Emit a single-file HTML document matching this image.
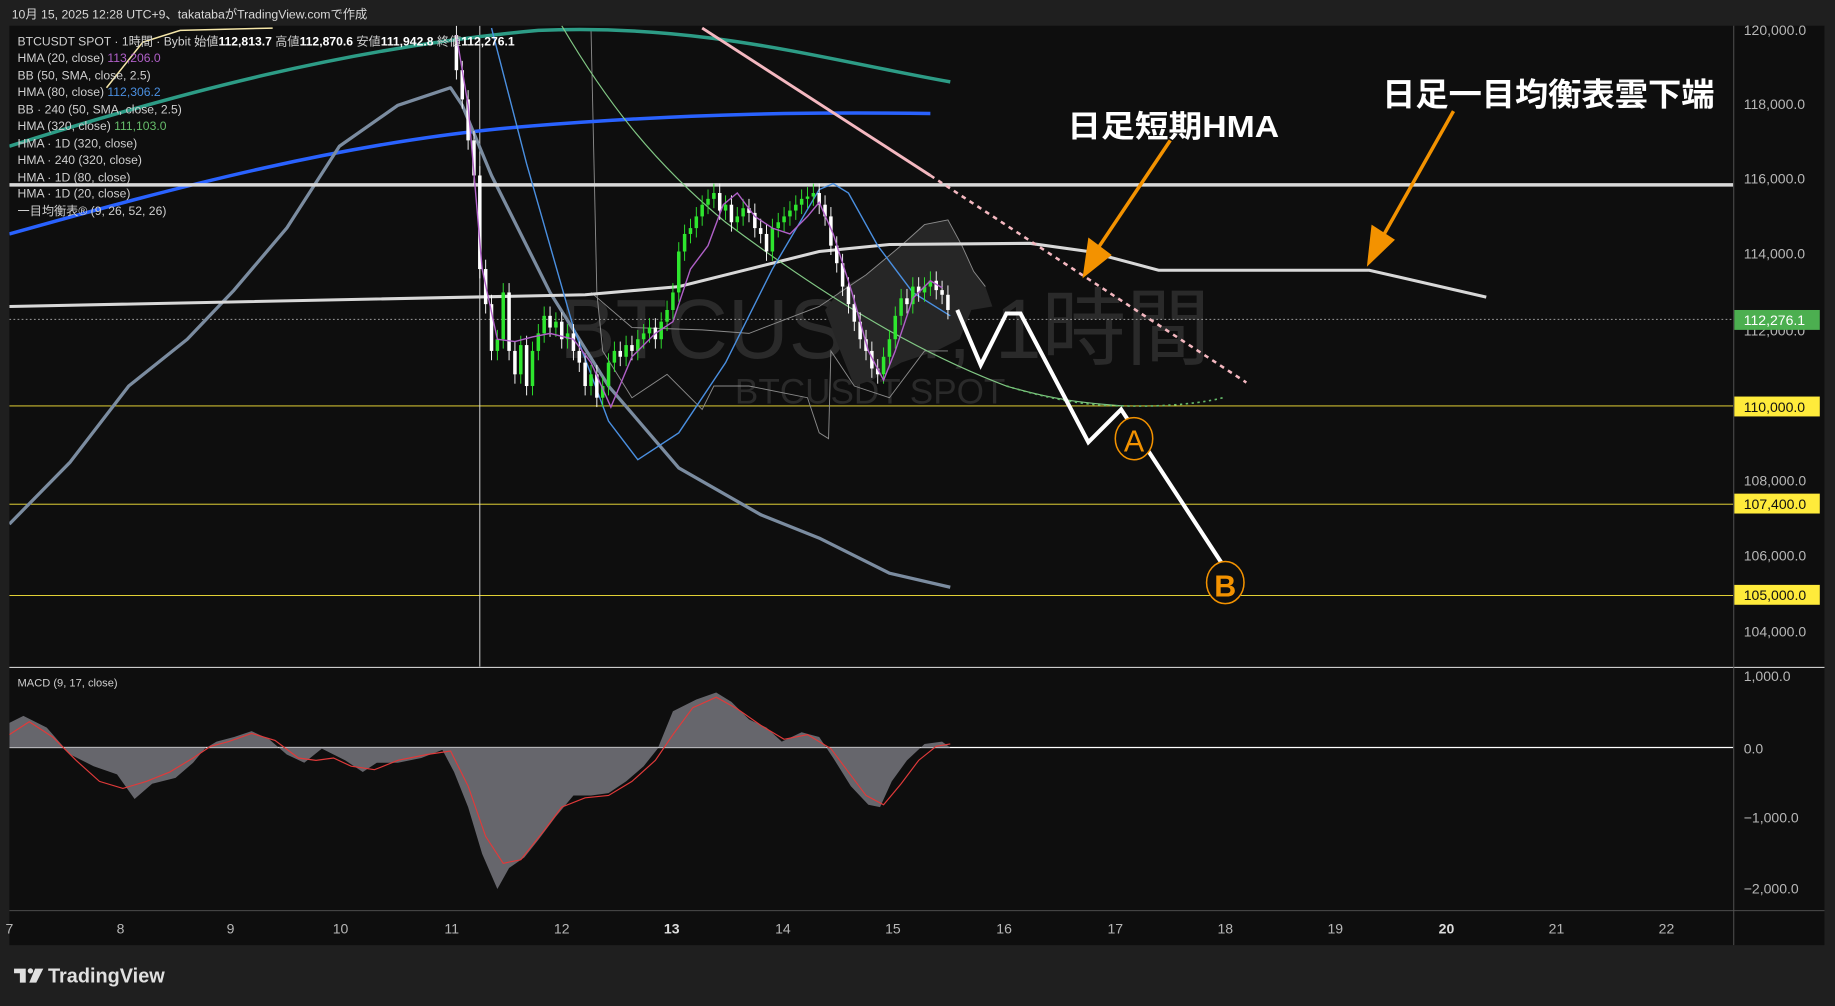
<!DOCTYPE html>
<html><head><meta charset="utf-8"><style>
html,body{margin:0;padding:0;background:#1f1f1f;width:1835px;height:1006px;overflow:hidden}
svg{display:block}
text{font-family:"Liberation Sans","Noto Sans CJK JP",sans-serif}
</style></head><body>
<svg id="s" width="1835" height="1006" viewBox="0 0 1568 860" preserveAspectRatio="none" xmlns="http://www.w3.org/2000/svg">
<rect width="1568" height="860" fill="#1f1f1f"/>
<text x="10" y="16" font-size="10.5" fill="#d8d8d8">10月 15, 2025 12:28 UTC+9、takatabaがTradingView.comで作成</text>
<rect x="8" y="22" width="1551" height="786" fill="#0e0e0e"/>
<defs><clipPath id="pc"><rect x="8" y="22" width="1473" height="548"/></clipPath><clipPath id="mc"><rect x="8" y="571" width="1473" height="207"/></clipPath></defs>
<g clip-path="url(#pc)">
<text x="478" y="306" font-size="72" fill="#2a2a2a">BTCUSDT, 1時間</text>
<text x="628" y="345" font-size="30" fill="#2a2a2a">BTCUSDT SPOT</text>
<line x1="8" y1="273" x2="1481" y2="273" stroke="#9a9a9a" stroke-width="0.8" stroke-dasharray="1.5,2"/>
<line x1="8" y1="347" x2="1481" y2="347" stroke="#ffeb3b" stroke-width="0.8"/>
<line x1="8" y1="431" x2="1481" y2="431" stroke="#ffeb3b" stroke-width="0.8"/>
<line x1="8" y1="509" x2="1481" y2="509" stroke="#ffeb3b" stroke-width="0.8"/>
<line x1="410" y1="22" x2="410" y2="570" stroke="#e0e0e0" stroke-width="0.8"/>
<path d="M705,265 L720,245 L740,235 L770,210 L790,192 L810,188 L822,210 L832,232 L842,245 L848,262 L830,265 L820,290 L800,300 L770,310 L745,325 L730,330 L718,300 Z" fill="#262626"/>
<path d="M505,250 L540,280 L600,282 L640,285 L700,262 L740,235 L770,210 L790,192 L810,188 L822,210 L832,232 L842,245" fill="none" stroke="#8a8a8a" stroke-width="0.8"/>
<path d="M505,24 L510,250 L515,300 L540,340 L570,320 L600,350 L610,330 L640,330 L690,340 L700,370 L708,375 L710,300 L730,330 L760,340 L790,300 L810,300" fill="none" stroke="#8a8a8a" stroke-width="0.8"/>
<path d="M8,125 C150,80 300,40 460,26 C600,20 700,50 812,70" fill="none" stroke="#2d9c86" stroke-width="3"/>
<path d="M8,200 C150,160 300,120 450,108 C600,96 700,96 795,97" fill="none" stroke="#2962ff" stroke-width="3"/>
<path d="M91,75 L122,36 L154,26 L233,24" fill="none" stroke="#f5e6a8" stroke-width="1.3"/>
<path d="M8,448 L60,395 L110,330 L160,290 L200,248 L245,195 L290,125 L340,90 L385,75 L395,90 L420,150 L470,250 L520,330 L580,400 L650,440 L700,460 L760,490 L812,502" fill="none" stroke="#7b8ca0" stroke-width="2.8" stroke-linejoin="round"/>
<line x1="8" y1="158" x2="1481" y2="158" stroke="#d8d8d8" stroke-width="3"/>
<path d="M8,262 L500,252 L580,245 L640,230 L700,215 L760,209 L880,208 L930,215 L990,231 L1170,231 L1270,254" fill="none" stroke="#d8d8d8" stroke-width="2.6"/>
<path d="M600,24 L795,150" fill="none" stroke="#f4b8c0" stroke-width="2.5"/>
<path d="M795,150 L1065,327" fill="none" stroke="#f4b8c0" stroke-width="2.2" stroke-dasharray="4,4"/>
<path d="M480,22 C520,90 560,140 620,190 C700,250 780,300 860,330 C900,342 930,345 960,347" fill="none" stroke="#81c784" stroke-width="1"/>
<path d="M860,330 C900,342 930,347 960,347 C1000,348 1030,344 1045,340" fill="none" stroke="#66bb6a" stroke-width="1.4" stroke-dasharray="2,3"/>
<path d="M420,24 L450,140 L490,280 L520,360 L545,393 L580,370 L620,310 L660,230 L700,162 L712,157 L725,165 L750,210 L780,250 L812,270" fill="none" stroke="#4a8fe0" stroke-width="1.2"/>
<g id="candles"></g>
<path d="M390,30 L400,90 L412,230 L425,290 L440,292 L455,288 L470,285 L490,290 L505,310 L522,348 L540,305 L560,285 L575,275 L590,230 L605,210 L618,175 L630,165 L645,185 L660,195 L675,200 L690,185 L700,173 L712,200 L728,250 L742,300 L755,325 L765,300 L780,255 L795,240 L805,246" fill="none" stroke="#b060c8" stroke-width="1.2"/>
<path d="M818,265 L838,312 L860,268 L872,268 L930,378 L958,350 L1045,483" fill="none" stroke="#ffffff" stroke-width="3.5" stroke-linejoin="miter"/>
<ellipse cx="969" cy="375" rx="16" ry="18" fill="#0e0e0e" stroke="#f39200" stroke-width="1.3"/>
<text x="969" y="386" font-size="26" fill="#f39200" text-anchor="middle">A</text>
<ellipse cx="1047" cy="498" rx="16" ry="18" fill="#0e0e0e" stroke="#f39200" stroke-width="1.3"/>
<text x="1047" y="510" font-size="26" font-weight="bold" fill="#f39200" text-anchor="middle">B</text>
<path d="M1000,120 L937,214" stroke="#f39200" stroke-width="3"/>
<path d="M925,238 L930,203 L950,218 Z" fill="#f39200"/>
<path d="M1242,95 L1180,205" stroke="#f39200" stroke-width="3"/>
<path d="M1168,228 L1172,192 L1192,205 Z" fill="#f39200"/>
<text x="912" y="117" font-size="26" font-weight="bold" fill="#ffffff" textLength="181" lengthAdjust="spacingAndGlyphs">日足短期HMA</text>
<text x="1181" y="90" font-size="27" font-weight="bold" fill="#ffffff" textLength="284" lengthAdjust="spacingAndGlyphs">日足一目均衡表雲下端</text>
</g>
<g font-size="10.4" fill="#cfcfcf">
<text x="15" y="39">BTCUSDT SPOT · 1時間 · Bybit  始値<tspan font-weight="bold" fill="#fff">112,813.7</tspan>  高値<tspan font-weight="bold" fill="#fff">112,870.6</tspan>  安値<tspan font-weight="bold" fill="#fff">111,942.8</tspan>  終値<tspan font-weight="bold" fill="#fff">112,276.1</tspan></text>
<text x="15" y="53">HMA (20, close)  <tspan fill="#b060c8">113,206.0</tspan></text>
<text x="15" y="68">BB (50, SMA, close, 2.5)</text>
<text x="15" y="82">HMA (80, close)  <tspan fill="#4a8fe0">112,306.2</tspan></text>
<text x="15" y="97">BB · 240 (50, SMA, close, 2.5)</text>
<text x="15" y="111">HMA (320, close)  <tspan fill="#66bb6a">111,103.0</tspan></text>
<text x="15" y="126">HMA · 1D (320, close)</text>
<text x="15" y="140">HMA · 240 (320, close)</text>
<text x="15" y="155">HMA · 1D (80, close)</text>
<text x="15" y="169">HMA · 1D (20, close)</text>
<text x="15" y="184">一目均衡表® (9, 26, 52, 26)</text>
</g>
<line x1="8" y1="570.5" x2="1559" y2="570.5" stroke="#e6e6e6" stroke-width="0.8"/>
<line x1="8" y1="778.5" x2="1559" y2="778.5" stroke="#555" stroke-width="0.8"/>
<line x1="1481.5" y1="22" x2="1481.5" y2="808" stroke="#555" stroke-width="0.8"/>
<g clip-path="url(#mc)">
<line x1="8" y1="639" x2="1481" y2="639" stroke="#ffffff" stroke-width="1"/>
<path d="M8,639 L8,618 L20,612 L40,622 L60,645 L80,655 L100,662 L115,683 L130,670 L150,665 L165,652 L175,640 L185,634 L200,630 L215,625 L230,632 L245,645 L260,652 L275,640 L285,645 L295,650 L310,660 L322,652 L340,652 L360,648 L378,641 L388,660 L400,690 L412,730 L425,760 L435,742 L448,733 L460,718 L475,698 L490,680 L505,680 L520,678 L535,668 L550,655 L562,640 L575,608 L595,598 L612,592 L625,600 L640,615 L655,622 L668,634 L685,626 L700,630 L712,648 L727,672 L742,688 L752,690 L762,668 L775,650 L790,636 L805,634 L812,639 Z" fill="#66666c"/>
<path d="M8,628 L25,617 L45,630 L65,650 L85,668 L105,674 L125,668 L145,660 L165,648 L180,638 L195,634 L215,627 L235,633 L255,648 L270,650 L285,648 L300,655 L320,658 L340,650 L365,645 L385,642 L400,672 L415,715 L430,738 L445,735 L465,710 L480,690 L500,682 L520,680 L540,668 L560,650 L575,628 L592,605 L612,596 L630,606 L650,620 L670,632 L690,628 L710,640 L725,660 L740,680 L755,688 L770,670 L785,650 L800,638 L812,636" fill="none" stroke="#e03a3a" stroke-width="1"/>
</g>
<text x="15" y="587" font-size="9.5" fill="#cfcfcf">MACD (9, 17, close)</text>
<g font-size="12" fill="#b7b7b7">
<text x="1490" y="30">120,000.0</text>
<text x="1490" y="93">118,000.0</text>
<text x="1490" y="157">116,000.0</text>
<text x="1490" y="221">114,000.0</text>
<text x="1490" y="287">112,000.0</text>
<text x="1490" y="415">108,000.0</text>
<text x="1490" y="479">106,000.0</text>
<text x="1490" y="544">104,000.0</text>
<text x="1490" y="582">1,000.0</text>
<text x="1490" y="644">0.0</text>
<text x="1490" y="703">−1,000.0</text>
<text x="1490" y="764">−2,000.0</text>
</g>
<rect x="1482" y="265" width="73" height="17" fill="#4caf50"/>
<text x="1490" y="278" font-size="12" fill="#ffffff">112,276.1</text>
<rect x="1482" y="339" width="73" height="17" fill="#ffeb3b"/>
<text x="1490" y="352" font-size="12" fill="#111">110,000.0</text>
<rect x="1482" y="422" width="73" height="17" fill="#ffeb3b"/>
<text x="1490" y="435" font-size="12" fill="#111">107,400.0</text>
<rect x="1482" y="500" width="73" height="17" fill="#ffeb3b"/>
<text x="1490" y="513" font-size="12" fill="#111">105,000.0</text>
<g font-size="12" fill="#b7b7b7" text-anchor="middle">
<text x="8" y="798">7</text><text x="103" y="798">8</text><text x="197" y="798">9</text><text x="291" y="798">10</text><text x="386" y="798">11</text><text x="480" y="798">12</text><text x="574" y="798" font-weight="bold" fill="#ddd">13</text><text x="669" y="798">14</text><text x="763" y="798">15</text><text x="858" y="798">16</text><text x="953" y="798">17</text><text x="1047" y="798">18</text><text x="1141" y="798">19</text><text x="1236" y="798" font-weight="bold" fill="#ddd">20</text><text x="1330" y="798">21</text><text x="1424" y="798">22</text>
</g>
<path d="M12,828 L22,828 L22,840 L17,840 L17,832 L12,832 Z" fill="#e0e0e0"/>
<circle cx="26" cy="830" r="2.3" fill="#e0e0e0"/>
<path d="M30,828 L37,828 L31,840 L25,840 Z" fill="#e0e0e0"/>
<text x="41" y="840" font-size="17" font-weight="bold" fill="#e0e0e0">TradingView</text>
</svg>
<script>
(function(){
var pts=[[385,30],[390,60],[395,85],[400,120],[405,150],[410,230],[415,260],[420,300],[425,290],[430,250],[435,300],[440,320],[445,295],[450,330],[455,300],[460,285],[465,270],[470,280],[475,275],[480,290],[485,285],[490,300],[495,310],[500,330],[505,320],[510,340],[515,330],[520,310],[525,300],[530,305],[535,295],[540,300],[545,290],[550,285],[555,280],[560,290],[565,275],[570,265],[575,250],[580,215],[585,200],[590,195],[595,185],[600,175],[605,170],[610,165],[615,180],[620,175],[625,190],[630,185],[635,178],[640,182],[645,195],[650,200],[655,215],[660,195],[665,190],[670,185],[675,180],[680,175],[685,170],[690,168],[695,165],[700,175],[705,185],[710,210],[715,225],[720,245],[725,260],[730,275],[735,290],[740,300],[745,315],[750,320],[755,305],[760,290],[765,270],[770,255],[775,260],[780,245],[785,250],[790,245],[795,240],[800,248],[805,252],[810,265]];
var g=document.getElementById('candles'),h='';
for(var i=1;i<pts.length;i++){var x=pts[i][0],a=pts[i-1][1],b=pts[i][1];var up=b<a;var c=up?'#2ee62e':'#ffffff';var t=Math.min(a,b),bt=Math.max(a,b);if(bt-t<2)bt=t+2;
h+='<line x1="'+x+'" y1="'+(t-8)+'" x2="'+x+'" y2="'+(bt+8)+'" stroke="'+c+'" stroke-width="0.8"/><rect x="'+(x-1.5)+'" y="'+t+'" width="3" height="'+(bt-t)+'" fill="'+c+'"/>';}
g.innerHTML=h;
})();
</script>
</body></html>
